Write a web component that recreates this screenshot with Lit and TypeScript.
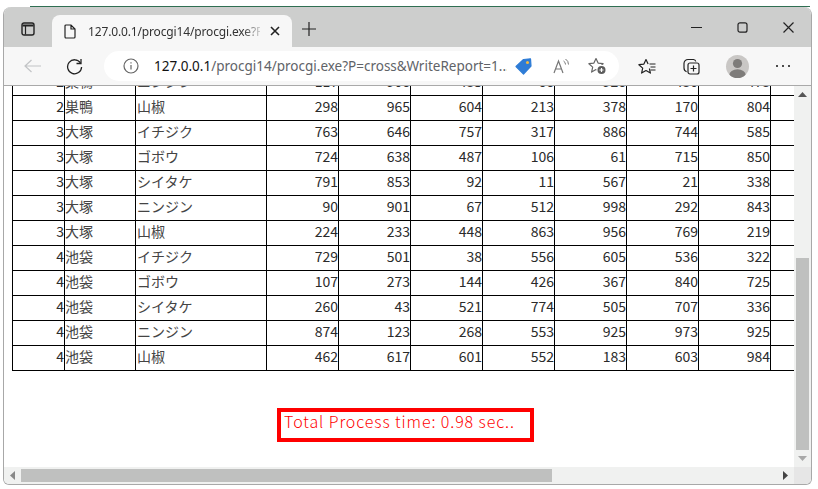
import { LitElement, html, css, svg } from "lit";
import { customElement } from "lit/decorators.js";

const rows: [string, string, string, number[]][] = [
  ["2", "巣鴨", "ニンジン", [117, 906, 435, 66, 926, 430, 473]],
  ["2", "巣鴨", "山椒", [298, 965, 604, 213, 378, 170, 804]],
  ["3", "大塚", "イチジク", [763, 646, 757, 317, 886, 744, 585]],
  ["3", "大塚", "ゴボウ", [724, 638, 487, 106, 61, 715, 850]],
  ["3", "大塚", "シイタケ", [791, 853, 92, 11, 567, 21, 338]],
  ["3", "大塚", "ニンジン", [90, 901, 67, 512, 998, 292, 843]],
  ["3", "大塚", "山椒", [224, 233, 448, 863, 956, 769, 219]],
  ["4", "池袋", "イチジク", [729, 501, 38, 556, 605, 536, 322]],
  ["4", "池袋", "ゴボウ", [107, 273, 144, 426, 367, 840, 725]],
  ["4", "池袋", "シイタケ", [260, 43, 521, 774, 505, 707, 336]],
  ["4", "池袋", "ニンジン", [874, 123, 268, 553, 925, 973, 925]],
  ["4", "池袋", "山椒", [462, 617, 601, 552, 183, 603, 984]],
];

const icon = (w: number, h: number, body: unknown) =>
  html`<svg width=${w} height=${h} viewBox="0 0 ${w} ${h}" fill="none" stroke="#222" stroke-width="1.2">${body}</svg>`;

@customElement("app-root")
export class AppRoot extends LitElement {
  static styles = css`
    :host { display: block; width: 818px; height: 489px; background: #fff; overflow: hidden; font-family: "Noto Sans CJK JP", "Liberation Sans", sans-serif; }
    .edge { height: 1px; margin: 6px 8px 0 30px; background: #2f6f52; }
    .win { margin-left: 3px; width: 809px; height: 478px; display: flex; flex-direction: column; border: 1px solid #a8a8a8; border-top: none; border-radius: 8px 8px 6px 6px; overflow: hidden; box-sizing: border-box; background: #fff; }
    .strip { height: 40px; flex: none; background: #cdcecd; display: flex; align-items: flex-end; padding-left: 12px; }
    .tabs-ico { width: 24px; height: 26px; margin-right: 12px; display: flex; align-items: center; justify-content: center; align-self: center; margin-top: 4px; }
    .tab { width: 240px; height: 32px; background: #f7f7f7; border-radius: 8px 8px 0 0; display: flex; align-items: center; padding: 0 12px; box-sizing: border-box; font-family: "Noto Sans", sans-serif; font-size: 12px; letter-spacing: -.15px; color: #333; gap: 10px; }
    .tab-title { flex: 1; white-space: nowrap; overflow: hidden; width: 166px; margin-left: 2px; -webkit-mask-image: linear-gradient(90deg, #000 155px, transparent 176px); mask-image: linear-gradient(90deg, #000 155px, transparent 176px); }
    .plus { margin: 0 0 6px 10px; height: 24px; display: flex; align-items: center; }
    .ctrls { margin-left: auto; display: flex; align-items: center; align-self: stretch; }
    .ctrl { width: 46px; height: 40px; display: flex; align-items: center; justify-content: center; }
    .bar { height: 39px; flex: none; background: #f7f7f7; border-bottom: 1px solid #a9a9a9; box-sizing: border-box; display: flex; align-items: center; padding-left: 9px; }
    .back { width: 38px; display: flex; justify-content: center; align-items: center; flex: none; }
    .reload { width: 47px; display: flex; justify-content: center; align-items: center; flex: none; }
    .omni { width: 515px; height: 30px; margin-left: 6px; border-radius: 15px; background: #fff; display: flex; align-items: center; flex: none; box-sizing: border-box; padding-left: 19px; font-family: "Noto Sans", sans-serif; font-size: 13.5px; color: #111; }
    .url { margin-left: 15px; width: 353px; white-space: nowrap; overflow: hidden; }
    .url span { color: #5f6368; }
    .omni-icons { display: flex; align-items: center; margin-left: 8px; }
    .read { margin: 0 18px 0 21px; display: flex; }
    .tools { display: flex; align-items: center; gap: 26px; margin-left: 19px; }
    .avatar { width: 23px; height: 23px; border-radius: 50%; background: #c9c7c5; overflow: hidden; display: flex; }
    .view { flex: 1; display: grid; grid-template-columns: 1fr 17px; grid-template-rows: 1fr 17px; min-height: 0; }
    .page { overflow: hidden; min-width: 0; min-height: 0; background: #fff; }
    table { border-collapse: collapse; table-layout: fixed; width: 800px; margin: -16px 0 0 8px; font-size: 14px; color: #2a2a2a; }
    td { border: 1px solid #000; height: 25px; padding: 0 0 5px; box-sizing: border-box; line-height: 18px; overflow: hidden; white-space: nowrap; }
    td.n { text-align: right; }
    td.v { padding-left: 1px; color: #444; }
    td.k { color: #444; }
    .c0 { width: 52px; } .c1 { width: 71px; } .c2 { width: 131px; } .c3 { width: 72px; } .cl { width: 42px; }
    .total-wrap { display: flex; justify-content: center; margin-top: 37px; padding-left: 13px; }
    .total { width: 257px; height: 34px; box-sizing: border-box; border: 4px solid #f00; color: #f00; font-size: 16px; font-weight: 300; letter-spacing: .9px; line-height: 19px; padding-left: 3px; white-space: nowrap; }
    .vs { background: #f0f1f0; display: flex; flex-direction: column; align-items: center; }
    .arrow { height: 17px; flex: none; display: flex; align-items: center; justify-content: center; }
    .vtrack { flex: 1; width: 13px; display: flex; flex-direction: column; justify-content: flex-end; }
    .vthumb { height: 192px; background: #bfc0bf; }
    .hs { background: #f0f1f0; display: flex; align-items: center; }
    .htrack { flex: 1; height: 13px; }
    .hthumb { width: 531px; height: 13px; background: #bfc0bf; }
    .corner { background: #e6e6e6; }
  `;

  render() {
    return html`<div class="edge"></div><div class="win">
      <div class="strip">
        <div class="tabs-ico">${icon(14, 14, svg`<rect x="1" y="1" width="12" height="12" rx="2" stroke-width="1.4"/><path d="M1.5 3.500h11" stroke-width="2"/><path d="M4.500 3.500v9"/>`)}</div>
        <div class="tab">
          ${icon(12, 15, svg`<path d="M1 2a1 1 0 0 1 1-1h5l4 4v8a1 1 0 0 1-1 1H2a1 1 0 0 1-1-1zM7 1v4h4"/>`)}
          <span class="tab-title">127.0.0.1/procgi14/procgi.exe?P=cross</span>
          ${icon(10, 10, svg`<path d="M1 1l8 8M9 1l-8 8" stroke-width="1.6"/>`)}
        </div>
        <div class="plus">${icon(14, 14, svg`<path d="M7 0v14M0 7h14"/>`)}</div>
        <div class="ctrls">
          <div class="ctrl">${icon(11, 11, svg`<path d="M0 5.500h11"/>`)}</div>
          <div class="ctrl">${icon(11, 11, svg`<rect x="1" y=".8" width="9" height="9.400" rx="2"/>`)}</div>
          <div class="ctrl">${icon(11, 11, svg`<path d="M.5.5l10 10M10.500.5l-10 10"/>`)}</div>
        </div>
      </div>
      <div class="bar">
        <div class="back">${icon(17, 14, svg`<path d="M1 7h16M7.500 1L1 7l6.500 6" stroke="#c2c4c6"/>`)}</div>
        <div class="reload">${icon(17, 17, svg`<path d="M14.500 5A7 7 0 1 0 15.600 9" stroke-width="1.300"/><path d="M15 1v4.500h-4.500" stroke-width="1.300"/>`)}</div>
        <div class="omni">
          ${icon(16, 16, svg`<circle cx="8" cy="8" r="7" stroke="#666"/><path d="M8 7v4.500M8 4.300v1.300" stroke="#666"/>`)}
          <div class="url">127.0.0.1<span>/procgi14/procgi.exe?P=cross&amp;WriteReport=1...</span></div>
          <div class="omni-icons">
            ${icon(17, 17, svg`<path d="M1 8.500L8.500 1.500L15.500 .8L16 8L8.500 16Z" fill="#2e7cd6" stroke="#2e7cd6" stroke-linejoin="round"/><circle cx="12.500" cy="4.500" r="1.500" fill="#f4b93e" stroke="none"/>`)}
            <span class="read">${icon(17, 17, svg`<path d="M1 15L5.500 3L10 15M2.800 11h5.400" stroke="#777"/><path d="M10.500 3a4 4 0 0 1 2 3.500M12.500 1a6.500 6.500 0 0 1 3 5.500" stroke="#777" stroke-width="1"/>`)}</span>
            ${icon(19, 18, svg`<path d="M8 1.500L10.100 6.100L15.100 6.700L11.300 10.100L12.400 15.100L8 12.500L3.600 15.100L4.700 10.100L.9 6.700L5.900 6.100Z" stroke="#666" stroke-linejoin="round"/><circle cx="13.500" cy="13" r="5.200" fill="#fff" stroke="none"/><circle cx="13.500" cy="13" r="4" fill="#5c5c5c" stroke="none"/><path d="M11.500 13h4M13.500 11v4" stroke="#fff"/>`)}
          </div>
        </div>
        <div class="tools">
          ${icon(18, 17, svg`<path d="M10.100 6.100L8 1.500L5.900 6.100L.9 6.700L4.700 10.100L3.600 15.100L8 12.500L12.400 15.100L11.400 10.500" stroke-linejoin="round"/><path d="M11.500 6h6M12.500 9h5M12.500 12h5" stroke-width="1"/>`)}
          ${icon(18, 18, svg`<path d="M6 2.500h5.500a2.500 2.500 0 0 1 2.300 2M6 2.500a4 4 0 0 0-4 4V11a4 4 0 0 0 2.600 3.700"/><rect x="6" y="6" width="11" height="11" rx="2"/><path d="M11.500 8.500v6M8.500 11.500h6"/>`)}
          <div class="avatar">${icon(23, 23, svg`<circle cx="11.500" cy="8.500" r="4.600" fill="#7e7c7a" stroke="none"/><ellipse cx="11.500" cy="20" rx="8.200" ry="5.800" fill="#7e7c7a" stroke="none"/>`)}</div>
          ${icon(16, 4, svg`<circle cx="2" cy="2" r="1.100" fill="#222" stroke="none"/><circle cx="8" cy="2" r="1.100" fill="#222" stroke="none"/><circle cx="14" cy="2" r="1.100" fill="#222" stroke="none"/>`)}
        </div>
      </div>
      <div class="view">
        <div class="page">
          <table>
            <colgroup>
              <col class="c0"/><col class="c1"/><col class="c2"/>
              ${[0, 1, 2, 3, 4, 5, 6].map(() => html`<col class="c3"/>`)}
              <col class="cl"/>
            </colgroup>
            ${rows.map((r) => html`<tr>
              <td class="n">${r[0]}</td><td class="k">${r[1]}</td><td class="v">${r[2]}</td>
              ${r[3].map((v) => html`<td class="n">${v}</td>`)}
              <td></td>
            </tr>`)}
          </table>
          <div class="total-wrap"><div class="total">Total Process time: 0.98 sec..</div></div>
        </div>
        <div class="vs">
          <div class="arrow">${icon(9, 5, svg`<path d="M0 5L4.500 0L9 5Z" fill="#555" stroke="none"/>`)}</div>
          <div class="vtrack"><div class="vthumb"></div></div>
          <div class="arrow">${icon(9, 5, svg`<path d="M0 0L4.500 5L9 0Z" fill="#a8a8a8" stroke="none"/>`)}</div>
        </div>
        <div class="hs">
          <div class="arrow" style="width:17px">${icon(5, 9, svg`<path d="M5 0L0 4.500L5 9Z" fill="#888" stroke="none"/>`)}</div>
          <div class="htrack"><div class="hthumb"></div></div>
          <div class="arrow" style="width:17px">${icon(5, 9, svg`<path d="M0 0L5 4.500L0 9Z" fill="#444" stroke="none"/>`)}</div>
        </div>
        <div class="corner"></div>
      </div>
    </div>`;
  }
}
